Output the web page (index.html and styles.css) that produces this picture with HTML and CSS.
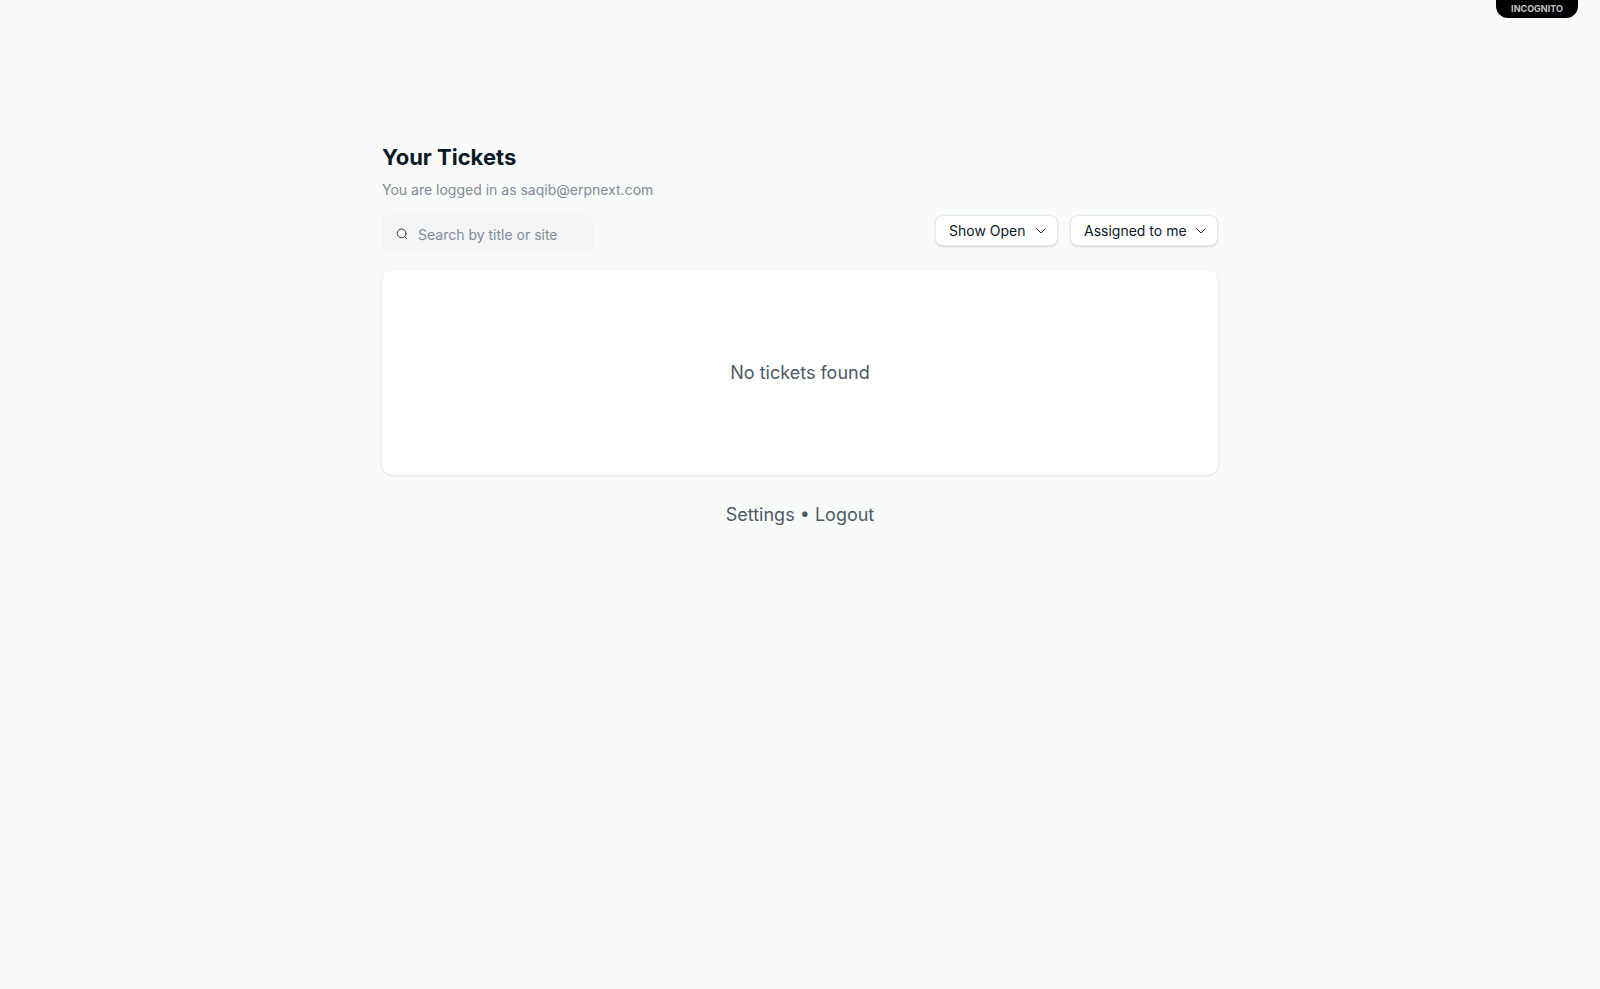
FILE: index.html
```html
<!DOCTYPE html>
<html lang="en">
<head>
<meta charset="utf-8">
<meta name="viewport" content="width=device-width, initial-scale=1">
<title>Your Tickets</title>
<link rel="stylesheet" href="styles.css">
</head>
<body>
<div class="badge">INCOGNITO</div>
<main class="page">
  <h1 class="title">Your Tickets</h1>
  <p class="subtitle">You are logged in as saqib@erpnext.com</p>
  <div class="toolbar">
    <label class="search">
      <svg class="search-icon" viewBox="0 0 12 12" fill="none" stroke="currentColor" stroke-linecap="round" aria-hidden="true"><circle cx="5.6" cy="5.4" r="4.4"/><path d="M8.8 8.6 10.8 10.6"/></svg>
      <input class="search-input" type="search" placeholder="Search by title or site" aria-label="Search by title or site">
    </label>
    <div class="filters">
      <div class="filter">
        <select class="select select-status" aria-label="Ticket status"><option>Show Open</option></select>
        <svg class="chevron" viewBox="0 0 10 6" fill="none" stroke="currentColor" stroke-linecap="round" stroke-linejoin="round" aria-hidden="true"><path d="M.7.7 5 5 9.3.7"/></svg>
      </div>
      <div class="filter">
        <select class="select select-assignee" aria-label="Assignee"><option>Assigned to me</option></select>
        <svg class="chevron" viewBox="0 0 10 6" fill="none" stroke="currentColor" stroke-linecap="round" stroke-linejoin="round" aria-hidden="true"><path d="M.7.7 5 5 9.3.7"/></svg>
      </div>
    </div>
  </div>
  <section class="card">No tickets found</section>
  <footer class="footer"><a class="link" href="#settings">Settings</a> • <a class="link" href="#logout">Logout</a></footer>
</main>
</body>
</html>
```
FILE: styles.css
```css
* { box-sizing: border-box; }
body {
  margin: 0;
  background: #f9fbfa;
  color: #4c5a67;
  font-family: Inter, "Liberation Sans", sans-serif;
}
.badge {
  position: absolute;
  top: 0;
  right: 22px;
  width: 82px;
  height: 18px;
  border-radius: 0 0 12px 12px;
  background: #000;
  color: #c4c4c4;
  font-size: 9px;
  font-weight: 700;
  line-height: 18px;
  text-align: center;
}
.page {
  max-width: 868px;
  margin: 0 auto;
  padding: 142px 16px 32px;
}
.title {
  margin: 0;
  color: #0b1826;
  font-size: 22px;
  font-weight: 700;
  line-height: 30px;
}
.subtitle {
  margin: 6px 0 13px;
  color: #7f8b97;
  font-size: 14px;
  line-height: 24px;
}
.toolbar {
  display: flex;
  flex-wrap: wrap;
  justify-content: space-between;
  align-items: flex-start;
  gap: 12px;
}
.search {
  display: flex;
  align-items: center;
  gap: 10px;
  width: 211px;
  height: 38px;
  padding: 0 14px;
  border-radius: 8px;
  background: #f4f5f7;
}
.search-icon {
  flex: none;
  width: 12px;
  height: 12px;
  color: #333c44;
}
.search-input {
  flex: 1;
  min-width: 0;
  padding: 0;
  border: 0;
  outline: 0;
  background: none;
  color: #0b1826;
  font: inherit;
  font-size: 14px;
}
.search-input::placeholder { color: #7f8b97; opacity: 1; }
.filters { display: flex; gap: 12px; }
.filter { display: grid; align-items: center; }
.select, .chevron { grid-area: 1 / 1; }
.select {
  appearance: none;
  height: 31px;
  padding: 0 24px 0 13px;
  border: 1px solid #e7eaec;
  border-radius: 8px;
  background: #fff;
  box-shadow: 0 1px 2px rgba(0, 0, 0, 0.16);
  color: #0b1826;
  font: inherit;
  font-size: 14px;
}
.select-status { width: 123px; }
.select-assignee { width: 148px; }
.chevron {
  justify-self: end;
  width: 10px;
  height: 6px;
  margin-right: 12px;
  color: #28323b;
  pointer-events: none;
}
.card {
  display: flex;
  align-items: center;
  justify-content: center;
  margin-top: 17px;
  padding: 88px 16px;
  border-radius: 10px;
  background: #fff;
  box-shadow: 0 0 2px rgba(0, 0, 0, 0.1), 0 1px 2px rgba(0, 0, 0, 0.08);
  font-size: 18px;
  line-height: 29px;
}
.footer {
  margin-top: 26px;
  font-size: 18px;
  line-height: 28px;
  text-align: center;
}
.link { color: inherit; text-decoration: none; }
```
